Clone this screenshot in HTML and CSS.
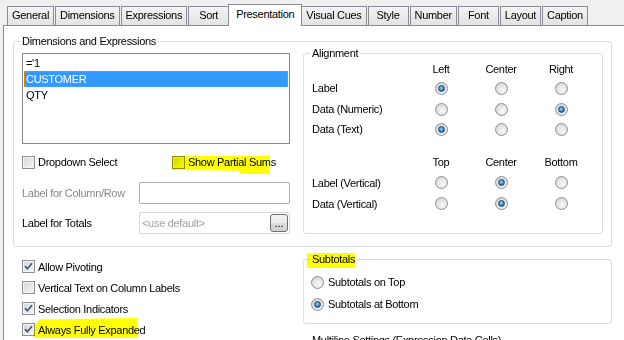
FILE: index.html
```html
<!DOCTYPE html>
<html>
<head>
<meta charset="utf-8">
<title>Chart Properties - Presentation</title>
<link rel="stylesheet" href="styles.css">
</head>
<body>

<div class="tabs">
	<div class="tab">General</div>
	<div class="tab">Dimensions</div>
	<div class="tab">Expressions</div>
	<div class="tab">Sort</div>
	<div class="tab active">Presentation</div>
	<div class="tab">Visual Cues</div>
	<div class="tab">Style</div>
	<div class="tab">Number</div>
	<div class="tab">Font</div>
	<div class="tab">Layout</div>
	<div class="tab">Caption</div>
</div>

<div class="page">

	<fieldset class="group dims">
		<legend>Dimensions and Expressions</legend>
		<div class="dims-body">

			<div class="dims-left">
				<div class="listbox">
					<div class="item">='1</div>
					<div class="item selected">CUSTOMER</div>
					<div class="item">QTY</div>
				</div>

				<div class="check-row">
					<label class="check"><span class="box"></span>Dropdown Select</label>
					<label class="check marked"><span class="box"></span>Show Partial Sums<span class="mark mark-sums"></span></label>
				</div>

				<div class="field">
					<span class="field-label off">Label for Column/Row</span>
					<span class="textbox"></span>
				</div>
				<div class="field second">
					<span class="field-label">Label for Totals</span>
					<span class="textbox off"><span class="placeholder">&lt;use default&gt;</span><span class="dots">...</span></span>
				</div>
			</div>

			<fieldset class="group align">
				<legend>Alignment</legend>
				<div class="radio-grid">
					<span></span><span class="head">Left</span><span class="head">Center</span><span class="head">Right</span>
					<span>Label</span><span class="radio on"></span><span class="radio"></span><span class="radio"></span>
					<span>Data (Numeric)</span><span class="radio"></span><span class="radio"></span><span class="radio on"></span>
					<span>Data (Text)</span><span class="radio on"></span><span class="radio"></span><span class="radio"></span>
				</div>
				<div class="radio-grid vert">
					<span></span><span class="head">Top</span><span class="head">Center</span><span class="head">Bottom</span>
					<span>Label (Vertical)</span><span class="radio"></span><span class="radio on"></span><span class="radio"></span>
					<span>Data (Vertical)</span><span class="radio"></span><span class="radio on"></span><span class="radio"></span>
				</div>
			</fieldset>

		</div>
	</fieldset>

	<div class="lower">
		<div class="options">
			<label class="option"><span class="box"><svg class="tick" viewBox="0 0 11 11"><path d="M2 5.2 L4.4 7.8 L9 2.2"/></svg></span>Allow Pivoting</label>
			<label class="option"><span class="box"></span>Vertical Text on Column Labels</label>
			<label class="option"><span class="box"><svg class="tick" viewBox="0 0 11 11"><path d="M2 5.2 L4.4 7.8 L9 2.2"/></svg></span>Selection Indicators</label>
			<label class="option marked"><span class="box"><svg class="tick" viewBox="0 0 11 11"><path d="M2 5.2 L4.4 7.8 L9 2.2"/></svg></span>Always Fully Expanded<span class="mark mark-expanded"></span></label>
		</div>

		<div class="side">
			<fieldset class="group subtotals">
				<legend class="marked">Subtotals<span class="mark mark-subtotals"></span></legend>
				<label class="sub-option"><span class="radio"></span>Subtotals on Top</label>
				<label class="sub-option"><span class="radio on"></span>Subtotals at Bottom</label>
			</fieldset>
			<fieldset class="group multiline">
				<legend>Multiline Settings (Expression Data Cells)</legend>
			</fieldset>
		</div>
	</div>

</div>

</body>
</html>
```

FILE: styles.css
```css
body {
	margin: 0;
	width: 624px;
	height: 340px;
	overflow: hidden;
	background: #f0f0f0;
	font-family: "Liberation Sans", Arial, sans-serif;
	font-size: 11px;
	letter-spacing: -0.3px;
	color: #000;
}

/* tab strip */

.tabs {
	display: flex;
	align-items: flex-end;
	height: 25px;
	padding-left: 7px;
}

.tab {
	box-sizing: border-box;
	min-width: 41px;
	height: 19px;
	margin-right: 1px;
	padding: 2px 4px 0;
	border: 1px solid #898c95;
	border-bottom: none;
	background: linear-gradient(#f3f3f3, #e3e3e3);
	line-height: 13px;
	text-align: center;
	white-space: nowrap;
}

.tab.active {
	position: relative;
	z-index: 1;
	height: 22px;
	margin: 0 -1px -1px -2px;
	padding: 3px 7px 0;
	background: #fff;
}

.page {
	box-sizing: border-box;
	width: 640px;
	height: 330px;
	margin-left: 3px;
	padding: 9px 0 0 9px;
	border: 1px solid #898c95;
	background: #fff;
}

/* group boxes */

.group {
	box-sizing: border-box;
	min-width: 0;
	margin: 0;
	padding: 0 8px;
	border: 1px solid #d5dfe5;
	border-radius: 3px;
}

.group legend {
	margin-left: -2px;
	padding: 0 2px;
	line-height: 13px;
}

.dims {
	width: 599px;
	padding: 0 8px 12px 8px;
}

.dims-body {
	display: grid;
	grid-template-columns: 268px 300px;
	column-gap: 13px;
}

.listbox {
	box-sizing: border-box;
	height: 91px;
	margin-top: 5px;
	padding: 1px;
	border: 1px solid #828790;
	background: #fff;
}

.item {
	box-sizing: border-box;
	height: 16px;
	padding-left: 2px;
	line-height: 16px;
}

.item.selected {
	background: #3399ff;
	color: #fff;
	outline: 1px dotted #e0892a;
	outline-offset: -1px;
}

.check-row {
	display: grid;
	grid-template-columns: 150px auto;
	height: 16px;
	margin-top: 10px;
}

.check,
.option {
	display: flex;
	align-items: center;
	gap: 3px;
	justify-self: start;
}

.marked {
	position: relative;
}

.box {
	box-sizing: border-box;
	flex: none;
	width: 13px;
	height: 13px;
	border: 1px solid #8e8f8f;
	background: linear-gradient(135deg, #d3d6da, #f6f6f6);
	box-shadow: inset 0 0 0 1px #f4f4f4;
}

.tick {
	display: block;
	width: 11px;
	height: 11px;
}

.tick path {
	fill: none;
	stroke: #42577f;
	stroke-width: 1.7;
}

.field {
	display: grid;
	grid-template-columns: 117px 151px;
	align-items: center;
	margin-top: 12px;
}

.field.second {
	margin-top: 8px;
}

.field-label.off {
	color: #8a8a8a;
}

.textbox {
	box-sizing: border-box;
	display: flex;
	align-items: center;
	height: 22px;
	border: 1px solid #abadb3;
	border-radius: 2px;
	background: #fff;
}

.textbox.off {
	justify-content: space-between;
	padding: 0 1px 0 2px;
	border-color: #d9d9d9;
}

.placeholder {
	color: #a3a3a3;
}

.dots {
	box-sizing: border-box;
	width: 18px;
	height: 18px;
	border: 1px solid #707070;
	border-radius: 3px;
	background: linear-gradient(#f2f2f2, #ebebeb 50%, #dddddd 50%, #cfcfcf);
	line-height: 17px;
	text-align: center;
	letter-spacing: 0;
}

/* alignment */

.align {
	margin-top: -1px;
}

.radio-grid {
	display: grid;
	grid-template-columns: 99px 60px 60px 60px;
	grid-template-rows: 17px 22px 20px 20px;
	align-items: center;
}

.radio-grid.vert {
	grid-template-rows: 18px 23px 19px;
	margin-top: 14px;
}

.head {
	text-align: center;
}

.radio {
	box-sizing: border-box;
	display: flex;
	flex: none;
	align-items: center;
	justify-content: center;
	justify-self: center;
	width: 13px;
	height: 13px;
	border: 1px solid #8e8f8f;
	border-radius: 50%;
	background: radial-gradient(circle at 60% 65%, #f8f8f8, #e2e2e2 55%, #c6c6c6);
}

.radio.on::after {
	content: "";
	box-sizing: border-box;
	width: 7px;
	height: 7px;
	border: 1px solid #1f4d78;
	border-radius: 50%;
	background: radial-gradient(circle at 45% 40%, #9ed6f5, #2b7dbf 60%, #17507f);
}

/* lower part */

.lower {
	display: grid;
	grid-template-columns: 290px 309px;
}

.options {
	padding: 9px 0 0 9px;
}

.option {
	height: 21px;
}

.side {
	padding-top: 6px;
}

.subtotals {
	padding: 5px 8px 8px 7px;
}

.subtotals legend {
	margin-left: -1px;
}

.sub-option {
	display: flex;
	align-items: center;
	gap: 4px;
	height: 22px;
}

.multiline {
	min-height: 40px;
	margin-top: 10px;
}

/* highlighter marks */

.mark {
	position: absolute;
	background: #ffff00;
	mix-blend-mode: multiply;
}

.mark-sums {
	left: 0;
	top: 2px;
	width: 98px;
	height: 18px;
	clip-path: polygon(0 0, 100% 0, 100% 100%, 70% 100%, 68% 82%, 0 78%);
}

.mark-expanded {
	left: 11px;
	top: -1px;
	width: 104px;
	height: 20px;
	clip-path: polygon(2% 35%, 6% 8%, 100% 0, 100% 100%, 0 100%);
}

.mark-subtotals {
	left: -3px;
	top: 0;
	width: 48px;
	height: 15px;
}
```
